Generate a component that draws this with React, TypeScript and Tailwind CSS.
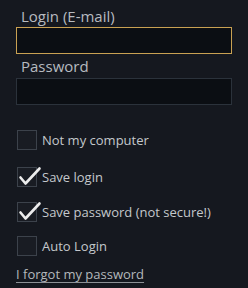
import { useState } from 'react';

const OPTIONS = [
  { id: 'notMine', text: 'Not my computer', checked: false, mt: 'mt-[25px]' },
  { id: 'saveLogin', text: 'Save login', checked: true, mt: 'mt-[17px]' },
  { id: 'savePass', text: 'Save password (not secure!)', checked: true, mt: 'mt-[15px]' },
  { id: 'autoLogin', text: 'Auto Login', checked: false, mt: 'mt-[14px]' },
];

const Check = ({ checked, onClick }: { checked: boolean; onClick: () => void }) => (
  <button onClick={onClick} className="relative w-[20px] h-[20px] shrink-0 border border-[#3c424b] bg-[#191c23]">
    {checked && (
      <svg className="absolute left-[-1px] top-[-1px] overflow-visible" width="24" height="20" viewBox="0 0 24 20">
        <path d="M3.5 10.5 L8.5 16.5 L22.5 1.5" fill="none" stroke="#ececec" strokeWidth="2.6" strokeLinecap="round" strokeLinejoin="round" />
      </svg>
    )}
  </button>
);

export default function App() {
  const [checked, setChecked] = useState<Record<string, boolean>>(
    Object.fromEntries(OPTIONS.map(o => [o.id, o.checked]))
  );

  return (
    <div className="w-[248px] h-[288px] bg-[#15181f] font-['Open_Sans',sans-serif] overflow-hidden">
      <div className="pl-[16px] pr-[16px]">
        <label className="block pl-[5px] pt-[6px] text-[15px] leading-[20px] text-[#b7bbc0]">Login (E-mail)</label>
        <input className="block mt-[1px] w-[216px] h-[27px] border border-[#c9a152] bg-[#0b0e13] outline-none text-[13px] text-[#ccc] px-2" />
        <label className="block pl-[5px] mt-[2px] text-[15px] leading-[20px] text-[#b7bbc0]">Password</label>
        <input type="password" className="block mt-[2px] w-[216px] h-[27px] border border-[#2b323b] bg-[#0b0e13] outline-none text-[13px] text-[#ccc] px-2" />

        {OPTIONS.map(o => (
          <div key={o.id} className={`flex items-center gap-[5px] pl-[1px] ${o.mt}`}>
            <Check checked={checked[o.id]} onClick={() => setChecked(p => ({ ...p, [o.id]: !p[o.id] }))} />
            <span className="text-[13px] leading-[16px] text-[#c4c8cc]">{o.text}</span>
          </div>
        ))}

        <a href="#" className="block mt-[10px] text-[13px] leading-[16px] text-[#b4b8bc] underline underline-offset-[3px] decoration-[#8d9196]">
          I forgot my password
        </a>
      </div>
    </div>
  );
}
